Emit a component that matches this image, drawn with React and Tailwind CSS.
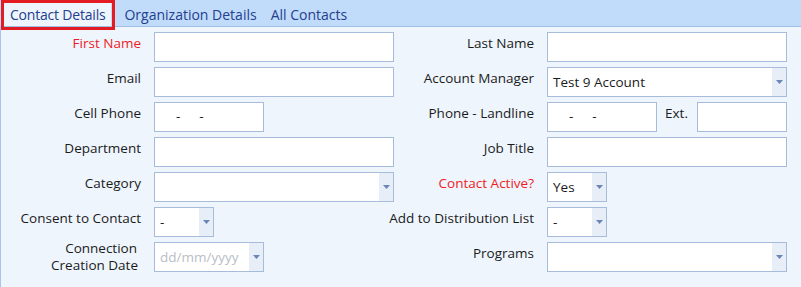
import React from "react";

const font = { fontFamily: '"Open Sans", "Liberation Sans", sans-serif' };

function Arrow() {
  return (
    <svg width="7" height="4" viewBox="0 0 7 4" className="block">
      <polygon points="0,0 7,0 3.5,4" fill="#6a86b6" />
    </svg>
  );
}

function Label({ children, red }) {
  return (
    <div
      className={`h-[30px] pr-[13px] pt-[2px] flex justify-end items-start whitespace-nowrap text-[13.5px] leading-[18px] ${
        red ? "text-[#ee1c25]" : "text-[#1b1b1b]"
      }`}
    >
      {children}
    </div>
  );
}

function Input({ className = "w-[240px]", children }) {
  return (
    <div
      className={`h-[30px] border border-[#a7bcdb] bg-white flex items-center text-[13.5px] text-[#1b1b1b] ${className}`}
    >
      {children}
    </div>
  );
}

function Select({ className = "w-[240px]", value, placeholder }) {
  return (
    <div
      className={`h-[30px] border border-[#a7bcdb] bg-white flex text-[13.5px] ${className}`}
    >
      <div className="flex-1 flex items-center pl-[5px] pt-[1px] min-w-0 whitespace-nowrap overflow-hidden">
        {value && <span className="text-[#1b1b1b]">{value}</span>}
        {placeholder && <span className="text-[#b9bec6]">{placeholder}</span>}
      </div>
      <div className="w-[14px] shrink-0 bg-[#e7eef8] flex items-center justify-center">
        <Arrow />
      </div>
    </div>
  );
}

function Phone({ className }) {
  return (
    <Input className={className}>
      <span className="pl-[21px] pb-[2px]">-</span>
      <span className="pl-[19px] pb-[2px]">-</span>
    </Input>
  );
}

export default function App() {
  return (
    <div className="w-[801px] h-[287px] bg-[#eef5fd] overflow-hidden flex flex-col" style={font}>
      {/* Tabs */}
      <div className="relative h-[27px] shrink-0 bg-[#c1dbfa] border-b border-[#9fc0e8] flex items-end text-[14px] text-[#23408e]">
        <div className="ml-[4px] h-[24px] px-[6px] bg-[#eef5fd] flex items-center tracking-[-0.2px]">Contact Details</div>
        <div className="ml-[10px] h-[24px] px-[3px] flex items-center">Organization Details</div>
        <div className="ml-[8px] h-[24px] px-[3px] flex items-center">All Contacts</div>
        <div className="absolute left-[1px] top-0 w-[114px] h-[30px] border-[3px] border-[#e31b23] z-10" />
      </div>

      {/* Form */}
      <div className="flex-1 border-l border-[#a9c5ea]">
        <div className="grid grid-cols-[153px_240px_153px_240px] content-start gap-y-[5px] pt-[5px]">
          <Label red>First Name</Label>
          <Input />
          <Label>Last Name</Label>
          <Input />

          <Label>Email</Label>
          <Input />
          <Label>Account Manager</Label>
          <Select value="Test 9 Account" />

          <Label>Cell Phone</Label>
          <Phone className="w-[110px]" />
          <Label>Phone - Landline</Label>
          <div className="flex">
            <Phone className="w-[110px]" />
            <div className="w-[40px] pl-[8px] pt-[2px] text-[13.5px] leading-[18px] text-[#1b1b1b]">Ext.</div>
            <Input className="w-[90px]" />
          </div>

          <Label>Department</Label>
          <Input />
          <Label>Job Title</Label>
          <Input />

          <Label>Category</Label>
          <Select />
          <Label red>Contact Active?</Label>
          <Select className="w-[60px]" value="Yes" />

          <Label>Consent to Contact</Label>
          <Select className="w-[60px]" value="-" />
          <Label>Add to Distribution List</Label>
          <Select className="w-[60px]" value="-" />

          <div className="pr-[16px] -mt-[2px] text-right text-[13.5px] leading-[17px] text-[#1b1b1b] flex flex-col items-end">
            <span className="pr-[1px]">Connection</span>
            <span>Creation Date</span>
          </div>
          <Select className="w-[110px]" placeholder="dd/mm/yyyy" />
          <Label>Programs</Label>
          <Select />
        </div>
      </div>
    </div>
  );
}
